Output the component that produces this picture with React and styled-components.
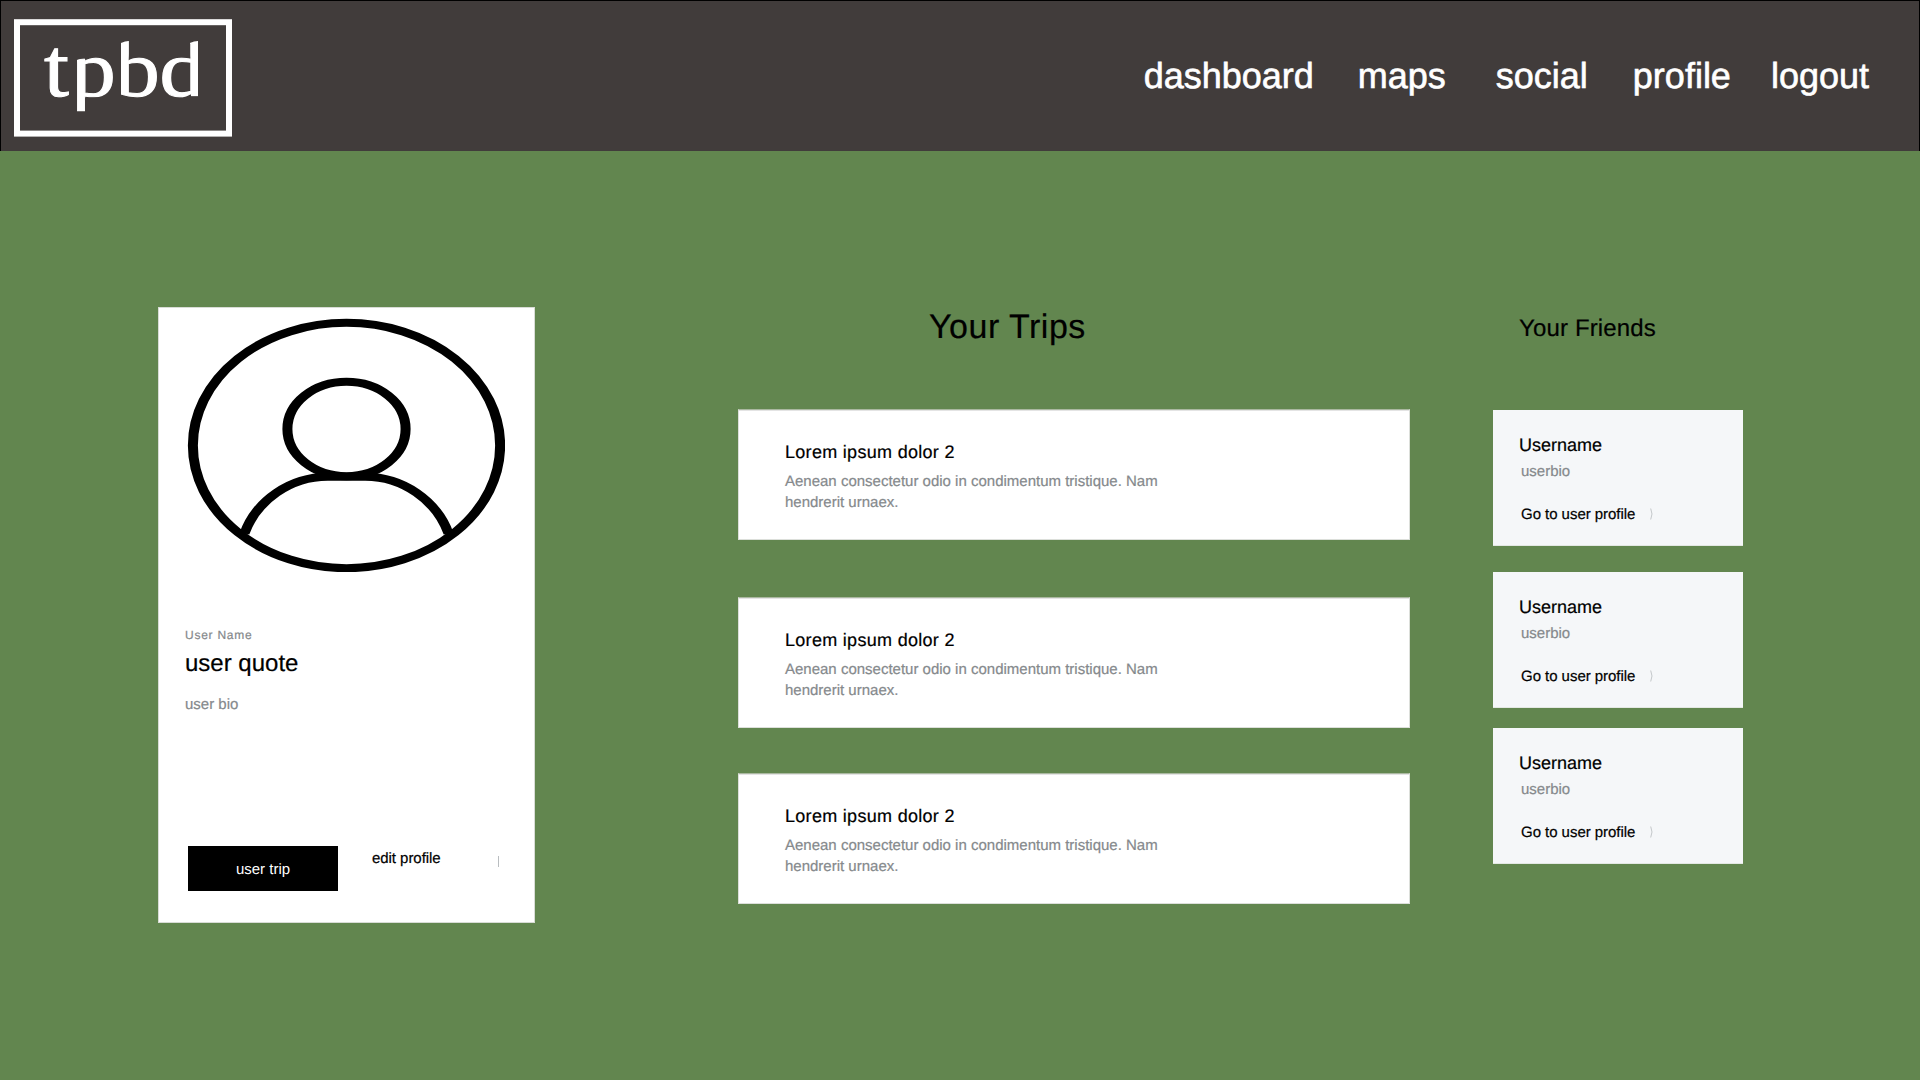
import React from "react";
import styled, { createGlobalStyle } from "styled-components";

const GlobalStyle = createGlobalStyle`
  * { box-sizing: border-box; margin: 0; padding: 0; }
  body {
    background: #62864f;
    font-family: "Liberation Sans", Arial, sans-serif;
    color: #000;
    text-rendering: geometricPrecision;
  }
`;

const Page = styled.div`
  width: 1920px;
  height: 1080px;
  background: #62864f;
  overflow: hidden;
`;

const Header = styled.header`
  height: 151px;
  display: flex;
  justify-content: space-between;
  align-items: flex-start;
  background: #413c3b;
  border: 1px solid #000;
  border-bottom: 0;
  padding: 18px 50px 0 13px;
`;

const Logo = styled.svg`
  display: block;
  width: 218px;
  height: 118px;
`;

const Nav = styled.nav`
  display: flex;
  padding-top: 36px;
`;

const NavLink = styled.a`
  color: #fff;
  font-size: 36px;
  line-height: 42px;
  margin-left: ${(p) => p.$gap}px;
  -webkit-text-stroke: 0.6px #fff;
`;

const Main = styled.main`
  display: flex;
  align-items: flex-start;
  padding: 156px 0 0 158px;
`;

const ProfileCard = styled.section`
  width: 377px;
  height: 616px;
  background: #fff;
  border: 1px solid #d8dcd6;
  display: flex;
  flex-direction: column;
  padding: 10px 26px 0;
`;

const Avatar = styled.svg`
  display: block;
  width: 318px;
  height: 254px;
  margin-left: 2px;
`;

const Text = styled.p`
  font-size: ${(p) => p.$size}px;
  line-height: ${(p) => p.$line}px;
  letter-spacing: ${(p) => p.$spacing || 0}px;
  color: ${(p) => (p.$muted ? "#85898c" : "#000")};
  -webkit-text-stroke: 0.2px currentColor;
  margin-top: ${(p) => p.$top || 0}px;
  margin-left: ${(p) => p.$left || 0}px;
`;

const Actions = styled.div`
  display: flex;
  align-items: flex-start;
  margin: 131px 0 0 3px;
`;

const TripButton = styled.button`
  width: 150px;
  height: 45px;
  border: 0;
  background: #000;
  color: #fff;
  font: 15px/45px "Liberation Sans", Arial, sans-serif;
  padding-top: 1px;
  text-rendering: geometricPrecision;
`;

const EditLink = styled.a`
  font-size: 15px;
  line-height: 20px;
  letter-spacing: -0.05px;
  margin: 3px 0 0 34px;
  width: 126px;
  -webkit-text-stroke: 0.2px currentColor;
`;

const Tick = styled.span`
  width: 1px;
  height: 11px;
  margin-top: 10px;
  background: #b9bdc0;
`;

const Trips = styled.section`
  width: 672px;
  margin-left: 203px;
`;

const TripsHeading = styled.h1`
  font-weight: 400;
  font-size: 34px;
  line-height: 39px;
  letter-spacing: 0.5px;
  padding: 1px 0 0 191px;
  margin-bottom: 62px;
  -webkit-text-stroke: 0.2px currentColor;
`;

const TripCard = styled.article`
  height: 131px;
  background: #fff;
  border: 1px solid #dcdfda;
  border-top-color: #aab8a0;
  box-shadow: inset 0 1px #e4e4e4;
  padding: 30px 220px 0 46px;
  margin-bottom: ${(p) => p.$after}px;
`;

const Friends = styled.section`
  width: 250px;
  margin-left: 83px;
`;

const FriendsHeading = styled.h2`
  font-weight: 400;
  font-size: 24px;
  line-height: 42px;
  letter-spacing: 0.15px;
  padding: 1px 0 0 26px;
  margin-bottom: 60px;
  -webkit-text-stroke: 0.2px currentColor;
`;

const FriendCard = styled.article`
  height: 136px;
  background: #f5f7f9;
  border-bottom: 1px solid #e3e8e3;
  padding: 23px 0 0 26px;
  margin-bottom: ${(p) => p.$after}px;
`;

const FriendLink = styled.a`
  display: flex;
  align-items: flex-start;
  gap: 15px;
  margin: 23px 0 0 2px;
  font-size: 15px;
  line-height: 20px;
  letter-spacing: -0.04px;
  -webkit-text-stroke: 0.2px currentColor;
`;

const Chevron = styled.svg`
  width: 3px;
  height: 12px;
  margin-top: 3px;
`;

const navItems = [
  ["dashboard", 0],
  ["maps", 44],
  ["social", 50],
  ["profile", 45],
  ["logout", 40],
];

const letters = [
  { ch: "t", x: 30, rise: 1.05, clip: "0,0 64,0 64,90 0,90" },
  { ch: "p", x: 57, rise: 1, clip: "63,41 71,38.5 110,36 110,78.5 71,78.5 71,92.3 63,92.3" },
  { ch: "b", x: 101, rise: 1, clip: "107,24 111,22.4 115,22 150,22 150,90 107,90" },
  { ch: "d", x: 145.4, rise: 1, clip: "140,36 176,36 176,24 180,22.4 184,22 184,77.2 176,77.2 176,90 140,90" },
];

function BrandLogo() {
  return (
    <Logo viewBox="0 0 218 118" aria-label="tpbd">
      <rect x="3" y="3.2" width="212" height="111.4" fill="none" stroke="#fff" strokeWidth="6" />
      {letters.map(({ ch, x, rise, clip }) => (
        <g key={ch} clipPath={`url(#clip-${ch})`}>
          <clipPath id={`clip-${ch}`}>
            <polygon points={clip} />
          </clipPath>
          <text
            transform={`translate(${x} 76.8) scale(1.12 ${rise})`}
            fontFamily="'Liberation Serif', serif"
            fontSize="80"
            fill="#fff"
            stroke="#fff"
            strokeWidth="1"
          >
            {ch}
          </text>
        </g>
      ))}
    </Logo>
  );
}

function UserAvatar() {
  return (
    <Avatar viewBox="-0.4 -0.5 254 254" preserveAspectRatio="none" fill="none" stroke="#000" strokeWidth="8">
      <circle cx="127" cy="127" r="122.7" />
      <circle cx="127" cy="110.5" r="47.2" />
      <path d="M45.5 215C55 182 82 158.3 112 158.3H142C172 158.3 199 182 208.5 215" />
    </Avatar>
  );
}

export default function App() {
  return (
    <Page>
      <GlobalStyle />
      <Header>
        <BrandLogo />
        <Nav>
          {navItems.map(([label, gap]) => (
            <NavLink key={label} $gap={gap}>{label}</NavLink>
          ))}
        </Nav>
      </Header>
      <Main>
        <ProfileCard>
          <UserAvatar />
          <Text $size={12} $line={16} $spacing={0.75} $top={55} $muted>User Name</Text>
          <Text $size={24} $line={28} $top={7}>user quote</Text>
          <Text $size={15} $line={20} $top={17} $muted>user bio</Text>
          <Actions>
            <TripButton>user trip</TripButton>
            <EditLink>edit profile</EditLink>
            <Tick />
          </Actions>
        </ProfileCard>
        <Trips>
          <TripsHeading>Your Trips</TripsHeading>
          {[57, 45, 0].map((after, i) => (
            <TripCard key={i} $after={after}>
              <Text $size={18} $line={24} $spacing={0.3}>Lorem ipsum dolor 2</Text>
              <Text $size={15} $line={21} $top={7} $muted>
                Aenean consectetur odio in condimentum tristique. Nam hendrerit urnaex.
              </Text>
            </TripCard>
          ))}
        </Trips>
        <Friends>
          <FriendsHeading>Your Friends</FriendsHeading>
          {[26, 20, 0].map((after, i) => (
            <FriendCard key={i} $after={after}>
              <Text $size={18} $line={24}>Username</Text>
              <Text $size={15} $line={20} $top={5} $left={2} $muted>userbio</Text>
              <FriendLink>
                Go to user profile
                <Chevron viewBox="0 0 3 12" fill="none" stroke="#c3c7ca">
                  <path d="M0.7 0.5L2 6L0.7 11.5" />
                </Chevron>
              </FriendLink>
            </FriendCard>
          ))}
        </Friends>
      </Main>
    </Page>
  );
}
